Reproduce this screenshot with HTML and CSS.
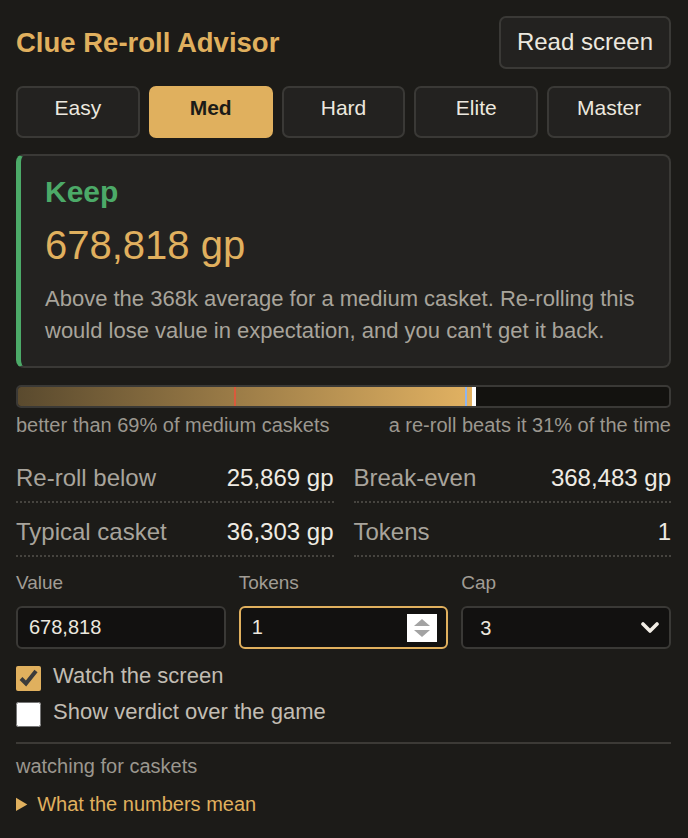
FILE: index.html
```html
<!DOCTYPE html>
<html lang="en">
<head>
  <meta charset="UTF-8">
  <meta name="viewport" content="width=device-width, initial-scale=1.0">
  <title>Clue Re-roll Advisor</title>
  <link rel="stylesheet" href="styles.css">
</head>
<body>
  <div class="app">
    <header class="top">
      <h1>Clue Re-roll Advisor</h1>
      <button class="btn read-btn">Read screen</button>
    </header>

    <div class="tiers">
      <button class="btn tier">Easy</button>
      <button class="btn tier active">Med</button>
      <button class="btn tier">Hard</button>
      <button class="btn tier">Elite</button>
      <button class="btn tier">Master</button>
    </div>

    <section class="verdict-card">
      <div class="verdict">Keep</div>
      <div class="amount">678,818 gp</div>
      <p class="reason">Above the 368k average for a medium casket. Re-rolling this would lose value in expectation, and you can't get it back.</p>
    </section>

    <div class="meter">
      <div class="meter-fill" style="width: 69.7%"></div>
      <span class="mark mark-reroll" style="left: 33.2%"></span>
      <span class="mark mark-even" style="left: 68.7%"></span>
      <span class="mark mark-you" style="left: 69.7%"></span>
    </div>
    <div class="meter-labels">
      <span>better than 69% of medium caskets</span>
      <span>a re-roll beats it 31% of the time</span>
    </div>

    <dl class="stats">
      <div class="stat"><dt>Re-roll below</dt><dd>25,869 gp</dd></div>
      <div class="stat"><dt>Break-even</dt><dd>368,483 gp</dd></div>
      <div class="stat"><dt>Typical casket</dt><dd>36,303 gp</dd></div>
      <div class="stat"><dt>Tokens</dt><dd>1</dd></div>
    </dl>

    <div class="fields">
      <div class="field">
        <label for="value">Value</label>
        <input type="text" id="value" class="input" value="678,818">
      </div>
      <div class="field">
        <label for="tokens">Tokens</label>
        <div class="input number focused">
          <input type="number" id="tokens" value="1" min="0">
          <span class="spin">
            <span class="spin-up"></span>
            <span class="spin-down"></span>
          </span>
        </div>
      </div>
      <div class="field">
        <label for="cap">Cap</label>
        <div class="select-wrap">
          <select id="cap" class="input">
            <option>1</option>
            <option>2</option>
            <option selected>3</option>
          </select>
          <svg class="chevron" width="18" height="12" viewBox="0 0 18 12">
            <polyline points="2,2 9,9 16,2" fill="none" stroke="#f2eee6" stroke-width="3.6" stroke-linecap="round" stroke-linejoin="round"/>
          </svg>
        </div>
      </div>
    </div>

    <div class="checks">
      <label class="check"><input type="checkbox" checked> <span>Watch the screen</span></label>
      <label class="check"><input type="checkbox"> <span>Show verdict over the game</span></label>
    </div>

    <hr class="rule">

    <div class="status">watching for caskets</div>

    <details class="help">
      <summary>What the numbers mean</summary>
    </details>
  </div>
</body>
</html>
```

FILE: styles.css
```css
body {
  margin: 0;
  background-color: #1c1b18;
  color: #ece8df;
  font-family: 'Liberation Sans', Arial, sans-serif;
}
.app {
  padding: 16px 17px 0 16px;
}
.top {
  display: flex;
  align-items: center;
  justify-content: space-between;
}
.top h1 {
  margin: 0;
  font-size: 27.5px;
  color: #e0b05e;
}
.btn {
  font-family: inherit;
  background-color: #232220;
  color: #ece8df;
  border: 2px solid #3a3936;
  border-radius: 7px;
  cursor: pointer;
}
.read-btn {
  height: 53px;
  padding: 0 16px 2px;
  font-size: 24px;
}
.tiers {
  display: grid;
  grid-template-columns: repeat(5, minmax(0, 1fr));
  gap: 9px;
  margin-top: 17px;
}
.tier {
  height: 52px;
  padding: 0 0 9px;
  font-size: 21px;
}
.tier.active {
  background-color: #e0b05e;
  border-color: #e0b05e;
  color: #1c1b18;
  font-weight: bold;
}

/* verdict card */
.verdict-card {
  margin-top: 16px;
  padding: 18px 24px 19px 24px;
  background-color: #232220;
  border: 2px solid #3a3936;
  border-left: 5px solid #4caa68;
  border-radius: 8px;
}
.verdict {
  font-size: 30px;
  line-height: 36px;
  font-weight: bold;
  color: #4caa68;
}
.amount {
  margin-top: 11px;
  font-size: 40px;
  line-height: 48px;
  color: #e0b05e;
}
.reason {
  margin: 14px 0 0;
  font-size: 22px;
  line-height: 32px;
  color: #a8a49b;
}

/* percentile meter */
.meter {
  position: relative;
  margin-top: 17px;
  height: 19px;
  background-color: #13120f;
  border: 2px solid #3a3936;
  border-radius: 5px;
  overflow: hidden;
}
.meter-fill {
  height: 100%;
  background: linear-gradient(to right, #5a4a2e, #e2b262);
}
.mark {
  position: absolute;
  top: 0;
  bottom: 0;
  width: 2px;
}
.mark-reroll {
  background-color: #d95a3c;
}
.mark-even {
  background-color: #8fb4ee;
}
.mark-you {
  width: 4px;
  background-color: #fff;
}
.meter-labels {
  display: flex;
  justify-content: space-between;
  margin-top: 6px;
  font-size: 20px;
  line-height: 23px;
  color: #9b978f;
}

/* stats */
.stats {
  display: grid;
  grid-template-columns: minmax(0, 1fr) minmax(0, 1fr);
  column-gap: 20px;
  row-gap: 3px;
  margin: 15px 0 0;
}
.stat {
  display: flex;
  justify-content: space-between;
  padding: 13px 0 10px;
  border-bottom: 2px dotted #46443f;
  font-size: 24px;
  line-height: 26px;
}
.stat dt {
  color: #a8a49c;
}
.stat dd {
  margin: 0;
  color: #efebe3;
}

/* inputs */
.fields {
  display: grid;
  grid-template-columns: repeat(3, minmax(0, 1fr));
  gap: 13px;
  margin-top: 15px;
}
.field label {
  display: block;
  margin-bottom: 12px;
  font-size: 19px;
  line-height: 22px;
  color: #a19d95;
}
.input {
  box-sizing: border-box;
  width: 100%;
  height: 43px;
  padding: 0 11px;
  font-family: inherit;
  font-size: 20px;
  color: #ece8df;
  background-color: #121110;
  border: 2px solid #3a3936;
  border-radius: 6px;
  outline: none;
}
.input.number {
  display: flex;
  align-items: center;
  padding-right: 9px;
}
.input.focused {
  border-color: #e0b05e;
}
.input.number input {
  flex: 1;
  min-width: 0;
  padding: 0;
  font-family: inherit;
  font-size: 20px;
  color: #ece8df;
  background: transparent;
  border: none;
  outline: none;
  -moz-appearance: textfield;
}
.input.number input::-webkit-inner-spin-button {
  -webkit-appearance: none;
}
.spin {
  display: flex;
  flex-direction: column;
  align-items: center;
  justify-content: center;
  gap: 4px;
  width: 30px;
  height: 28px;
  background-color: #fff;
}
.spin-up,
.spin-down {
  width: 0;
  height: 0;
  border-left: 8px solid transparent;
  border-right: 8px solid transparent;
}
.spin-up {
  border-bottom: 7px solid #a3a3a3;
}
.spin-down {
  border-top: 7px solid #a3a3a3;
}
.select-wrap {
  position: relative;
}
.select-wrap select {
  -webkit-appearance: none;
  appearance: none;
  padding-left: 17px;
}
.chevron {
  position: absolute;
  right: 12px;
  top: 16px;
  pointer-events: none;
}

/* checkboxes */
.checks {
  display: flex;
  flex-direction: column;
  gap: 11px;
  margin-top: 17px;
}
.check {
  display: flex;
  align-items: flex-start;
  gap: 12px;
  font-size: 22px;
  line-height: 20px;
  color: #c2bdb3;
}
.check input {
  width: 25px;
  height: 25px;
  margin: 0;
  accent-color: #e0b05e;
}
.rule {
  margin: 15px 0 0;
  border: none;
  border-top: 2px solid #3c3a36;
}
.status {
  margin-top: 11px;
  font-size: 20px;
  line-height: 23px;
  color: #9b978f;
}
.help {
  margin-top: 15px;
  font-size: 20px;
  line-height: 23px;
  color: #e0b05e;
}
.help summary {
  cursor: pointer;
}
```
